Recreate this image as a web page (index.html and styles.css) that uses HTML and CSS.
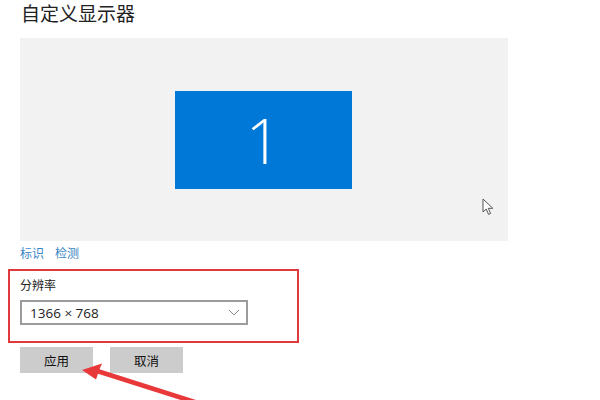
FILE: index.html
```html
<!DOCTYPE html>
<html lang="zh-CN">
<head>
<meta charset="utf-8">
<title>自定义显示器</title>
<link rel="stylesheet" href="styles.css">
</head>
<body>
<div class="page">
  <h1 class="title">自定义显示器</h1>
  <div class="preview">
    <div class="monitor">1</div>
    <svg class="cursor" width="14" height="18" viewBox="0 0 14 18">
      <path d="M1 1 L1 14 L4.2 11 L6.6 16.4 L8.6 15.5 L6.3 10.3 L10.8 10.3 Z" fill="#ffffff" stroke="#555" stroke-width="1" stroke-linejoin="round"/>
    </svg>
  </div>
  <div class="links">
    <a class="link">标识</a>
    <a class="link">检测</a>
  </div>
  <div class="highlight">
    <div class="label">分辨率</div>
    <div class="select">
      <span class="select-value">1366 × 768</span>
      <svg class="chevron" width="12" height="7" viewBox="0 0 12 7">
        <polyline points="1,1 6,6 11,1" fill="none" stroke="#8a8a8a" stroke-width="1"/>
      </svg>
    </div>
  </div>
  <div class="buttons">
    <button class="btn">应用</button>
    <button class="btn">取消</button>
  </div>
  <svg class="arrow" width="140" height="50" viewBox="0 0 140 50">
    <path d="M2 8 L22 1.5 L19.5 7.2 L138 45 L137 49.5 L18 11.8 L16 17.5 Z" fill="#e8383a"/>
  </svg>
</div>
</body>
</html>
```

FILE: styles.css
```css
html, body {
  margin: 0;
  padding: 0;
  background: #ffffff;
}
body {
  width: 600px;
  height: 400px;
  overflow: hidden;
  font-family: "Noto Sans CJK SC", "Noto Sans", sans-serif;
  color: #1a1a1a;
}
.page {
  position: relative;
  padding-left: 20px;
  height: 400px;
}
.title {
  margin: 0 0 12px 1px;
  font-size: 19px;
  line-height: 26px;
  font-weight: 400;
  color: #222;
}
.preview {
  position: relative;
  width: 488px;
  height: 203px;
  background: #f2f2f2;
  display: flex;
  align-items: center;
  justify-content: center;
}
.monitor {
  width: 177px;
  height: 98px;
  margin-left: -1px;
  background: #0078d7;
  color: #ffffff;
  display: flex;
  align-items: center;
  justify-content: center;
  font-family: "Open Sans", "Noto Sans", sans-serif;
  font-weight: 300;
  font-size: 62px;
  line-height: 1;
}
.cursor {
  position: absolute;
  left: 462px;
  top: 160px;
}
.links {
  margin-top: 4px;
  display: flex;
  gap: 11px;
  font-size: 12px;
  line-height: 16px;
}
.link {
  color: #3a86c4;
  cursor: pointer;
}
.highlight {
  margin: 8px 0 0 -12px;
  width: 277px;
  padding: 6px 0 16px 10px;
  border: 2px solid #e0393e;
}
.label {
  font-size: 12px;
  line-height: 16px;
  color: #222;
}
.select {
  margin-top: 7px;
  height: 21px;
  border: 2px solid #9c9c9c;
  display: flex;
  align-items: center;
  justify-content: space-between;
  padding: 0 6px 0 8px;
  box-sizing: content-box;
  width: 210px;
}
.select-value {
  font-family: "Open Sans", "Noto Sans", sans-serif;
  font-size: 13.5px;
  color: #222;
}
.chevron {
  display: block;
}
.buttons {
  margin-top: 4px;
  display: flex;
  gap: 17px;
}
.btn {
  width: 73px;
  height: 26px;
  border: none;
  background: #cccccc;
  font-family: "Noto Sans CJK SC", sans-serif;
  font-size: 12.5px;
  color: #111;
  padding: 0;
}
.arrow {
  position: absolute;
  left: 80px;
  top: 362px;
}
```
